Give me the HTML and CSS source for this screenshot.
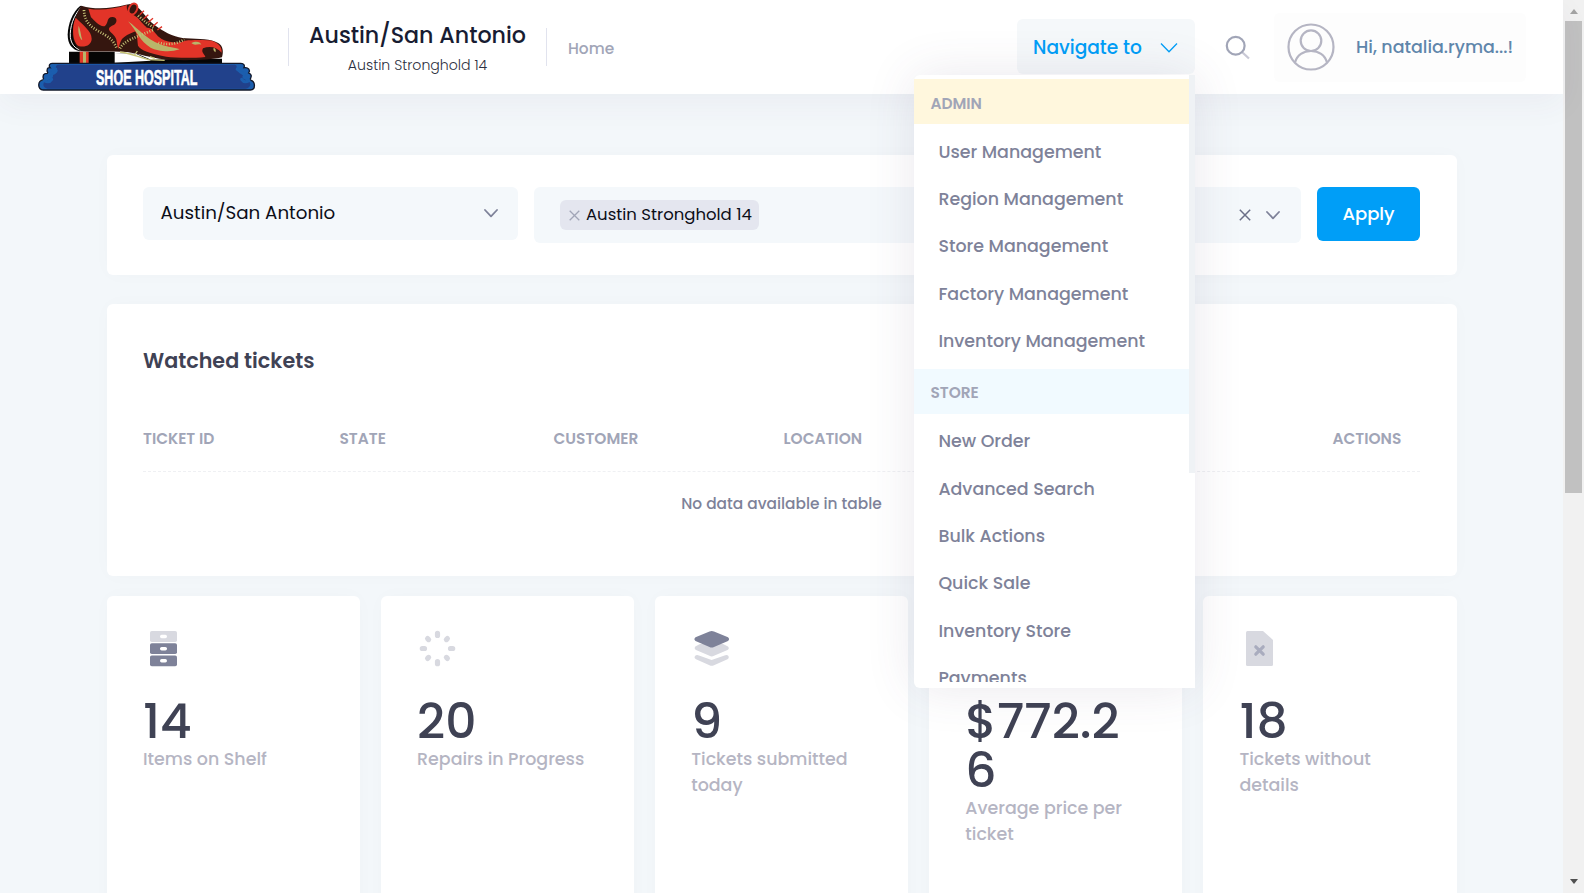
FILE: index.html
```html
<!DOCTYPE html>
<html lang="en">
<head>
<meta charset="utf-8">
<title>Shoe Hospital</title>
<link rel="stylesheet" href="styles.css">
</head>
<body>
<div class="page">
  <header class="header">
    <svg class="logo" viewBox="0 0 672 276" role="img" aria-label="Shoe Hospital">
      <!-- heel and sole -->
      <path d="M99 155H236V162L300 160L345 179L420 176H558V189H99Z" fill="#050505"/>
      <path d="M236 162L296 160L345 182L236 188Z" fill="#fff"/>
      <path d="M131 155h27v34h-27z" fill="#e23a28"/><path d="M141 155h9v34h-9z" fill="#b9b56a"/>
      <path d="M133 17C108 38 96 72 95 104C95 132 108 149 132 154L142 145L150 30Z" fill="#050505"/>
      <path d="M135 22C112 48 101 80 103 112C106 132 116 146 136 151" fill="none" stroke="#fff" stroke-width="3"/>
      <!-- upper -->
      <path d="M136 17C180 30 225 25 270 14L287 11L303 20C325 38 335 62 365 82C392 101 422 114 450 115C490 118 524 115 548 130C561 139 563 154 558 172C525 181 430 183 384 178C346 174 305 160 273 156C220 153 165 156 134 153C116 136 109 118 110 98C112 70 120 40 136 17Z" fill="#35160f"/>
      <path d="M119 53C139 74 167 92 167 116C167 132 151 143 130 139C111 132 105 83 119 53Z" fill="#e23428"/>
      <path d="M157 26C193 32 234 27 273 15C270 28 277 40 291 44C309 52 316 69 331 81C311 91 274 99 258 117C251 128 250 139 247 147C239 123 247 120 230 102C212 87 218 82 233 75C244 70 246 51 229 51C211 51 219 67 207 78C194 83 176 63 165 52Z" fill="#e23428"/>
      <path d="M276 64C303 55 319 83 342 85C354 91 360 107 377 117C395 127 428 132 447 122C475 119 493 120 515 121C542 122 559 139 557 158C543 141 521 137 501 145C494 158 506 162 508 171C468 175 420 174 391 170C340 160 315 151 306 137C303 114 306 98 288 80Z" fill="#e23428"/>
      <path d="M276 64C307 86 330 117 372 133C395 142 421 143 431 148C404 158 364 154 344 143C312 125 301 91 276 64Z" fill="#b9b56a"/>
      <path d="M128 77C125 92 128 112 139 121C134 104 134 91 128 77ZM466 129C481 122 493 126 496 134C483 130 477 139 466 129ZM533 143C539 144 541 152 538 157C533 153 531 148 533 143Z" fill="#b9b56a"/>
      <path d="M144 30C145 77 180 88 209 106C231 120 237 133 242 145M252 145C264 121 301 112 353 89M306 47C323 62 336 72 352 83M367 128C390 135 421 134 445 118" fill="none" stroke="#c7c478" stroke-width="8" stroke-dasharray="3 5"/>
      <path d="M324 32l-13 12M337 44l-14 12M351 55l-14 12M365 67l-14 12M378 80l-14 10" stroke="#e23428" stroke-width="4"/>
      <ellipse cx="291" cy="27" rx="12" ry="17" transform="rotate(25 291 27)" fill="#35160f" stroke="#e23428" stroke-width="6"/>
      <path d="M252 156C285 160 300 169 337 179L386 181M304 153l-8 12M342 170l14 5" fill="none" stroke="#c7c478" stroke-width="4"/>
      <!-- plinth -->
      <path d="M48 190H613C624 189 627 197 624 203C638 201 644 211 638 219C652 225 643 234 642 240C659 243 660 269 643 270H22C4 268 3 242 23 239C19 227 21 219 36 220C29 207 36 202 42 203C37 197 41 190 48 190Z" fill="#1b5eae" stroke="#12182a" stroke-width="4"/>
      <path d="M68 194H595C605 194 603 205 598 208C606 218 613 215 622 223C613 238 628 239 638 243C650 255 638 266 628 266H35C18 264 20 247 29 244C39 237 53 238 51 225C62 222 70 210 62 207C57 201 60 194 68 194Z" fill="#21418b"/>
      <path d="M39 223q13-8 20-16M25 242q14 8 22-4M624 223q-13-8-20-16M639 242q-14 8-22-4" fill="none" stroke="#1b5eae" stroke-width="9" stroke-linecap="round"/>
      <text class="logo-text" x="180" y="254" textLength="304" lengthAdjust="spacingAndGlyphs">SHOE HOSPITAL</text>
    </svg>
    <div class="region">
      <div class="region-name">Austin/San Antonio</div>
      <div class="region-store">Austin Stronghold 14</div>
    </div>
    <a class="home">Home</a>

    <div class="navigate">
      <button class="navigate-btn">Navigate to
        <svg width="18" height="12" viewBox="0 0 18 12"><path d="M1 1.5L9 9.8L17 1.5" fill="none" stroke="#009ef7" stroke-width="1.3"/></svg>
      </button>
      <div class="menu">
        <div class="menu-list">
          <div class="menu-title admin">ADMIN</div>
          <ul class="admin-items">
            <li>User Management</li><li>Region Management</li><li>Store Management</li><li>Factory Management</li><li>Inventory Management</li>
          </ul>
          <div class="menu-title store">STORE</div>
          <ul>
            <li>New Order</li><li>Advanced Search</li><li>Bulk Actions</li><li>Quick Sale</li><li>Inventory Store</li><li>Payments</li>
          </ul>
        </div>
        <div class="menu-thumb"></div>
      </div>
    </div>
    <svg class="search" width="26" height="26" viewBox="0 0 26 26" fill="none">
      <path d="M17.5 17.5L24 23.5" stroke="#c9c9d6" stroke-width="2.3"/>
      <circle cx="10.7" cy="10.7" r="8.9" stroke="#a1a5b7" stroke-width="2.2"/>
    </svg>
    <div class="user">
      <svg width="48" height="48" viewBox="0 0 48 48" fill="none" stroke="#b5b5c3" stroke-width="2.2">
        <circle cx="24" cy="24" r="22.5"/><circle cx="24" cy="17.7" r="10.3"/>
        <path d="M8 39.5C10 32 16.500 28 24 28S38 32 40 39.500"/>
      </svg>
      <span>Hi, natalia.ryma...!</span>
    </div>
  </header>

  <main class="content">
    <section class="card filter">
      <div class="select region-select">
        <span>Austin/San Antonio</span>
        <svg width="14" height="9" viewBox="0 0 14 9"><path d="M1 1L7 7.300L13 1" fill="none" stroke="#7e8299" stroke-width="1.800" stroke-linecap="round" stroke-linejoin="round"/></svg>
      </div>
      <div class="select store-select">
        <span class="tag">
          <svg width="11" height="11" viewBox="0 0 11 11"><path d="M.7.7L10.300 10.300M10.300.7L.7 10.300" stroke="#a1a5b7" stroke-width="1.3"/></svg>
          <span class="tag-text">Austin Stronghold 14</span>
        </span>
        <svg class="clear" width="12" height="12" viewBox="0 0 12 12"><path d="M.8.8L11.200 11.200M11.200.8L.8 11.200" stroke="#6b6f88" stroke-width="1.500"/></svg>
        <svg width="14" height="9" viewBox="0 0 14 9"><path d="M1 1L7 7.300L13 1" fill="none" stroke="#7e8299" stroke-width="1.800" stroke-linecap="round" stroke-linejoin="round"/></svg>
      </div>
      <button class="apply">Apply</button>
    </section>

    <section class="card watched">
      <h2>Watched tickets</h2>
      <div class="thead"><span>TICKET ID</span><span>STATE</span><span>CUSTOMER</span><span>LOCATION</span><span>ACTIONS</span></div>
      <div class="empty">No data available in table</div>
    </section>

    <section class="stats">
      <div class="card stat">
        <svg viewBox="0 0 42 42"><rect x="7" y="3" width="27" height="11" rx="1.800" fill="#d8d9e0"/><rect x="7" y="15.300" width="27" height="10.800" rx="1.800" fill="#7e8299"/><rect x="7" y="27.400" width="27" height="10.800" rx="1.800" fill="#7e8299"/><g fill="#fff"><rect x="17" y="6.800" width="7" height="3.500" rx="1.700"/><rect x="17" y="18.900" width="7" height="3.500" rx="1.700"/><rect x="17" y="31" width="7" height="3.500" rx="1.700"/></g></svg>
        <div class="num">14</div><div class="label">Items on Shelf</div>
      </div>
      <div class="card stat">
        <svg viewBox="0 0 42 42" stroke="#d8d9e0" stroke-width="5.200" stroke-linecap="round"><path d="M20.500 5.300v2.200M20.500 33.500v2.200M5.300 20.500h2.200M33.500 20.500h2.200M10.600 10.600l1 1M29.400 29.400l1 1M10.600 30.400l1-1M29.400 11.600l1-1"/></svg>
        <div class="num">20</div><div class="label">Repairs in Progress</div>
      </div>
      <div class="card stat">
        <svg viewBox="0 0 42 42"><path d="M4 28Q5.500 26.500 8 27.500L20.600 32L33.500 27.500Q36 26.500 37.500 28Q38.500 30.200 36.500 31.200L23 37.200Q20.600 38.500 18.500 37.200L5 31.200Q2.800 30.200 4 28ZM9 16H32L37 18.500Q38.800 20.500 36.500 22L23 27.800Q20.600 29 18.500 27.800L5 22Q2.800 20.500 4.300 18.500Z" fill="#d8d9e0"/><path d="M18.500 3.500Q20.600 2.700 23 3.500L37 9.300Q39.200 11.200 37 13L23 19Q20.600 20 18.500 19L4.500 13Q2.300 11.200 4.500 9.300Z" fill="#7e8299"/></svg>
        <div class="num">9</div><div class="label">Tickets submitted today</div>
      </div>
      <div class="card stat">
        <svg viewBox="0 0 42 42"></svg>
        <div class="num">$772.2<br>6</div><div class="label">Average price per ticket</div>
      </div>
      <div class="card stat">
        <svg viewBox="0 0 42 42"><path d="M8.500 3H24L34 12V36.500Q34 38 32.500 38H8.500Q7 38 7 36.500V4.500Q7 3 8.500 3Z" fill="#d8d9e0"/><path d="M16.800 18.800L24.200 26.200M24.200 18.800L16.800 26.200" stroke="#a9acbe" stroke-width="3.200" stroke-linecap="round"/></svg>
        <div class="num">18</div><div class="label">Tickets without details</div>
      </div>
    </section>
  </main>
</div>
<div class="scrollbar">
  <div class="arrow up"></div>
  <div class="thumb"></div>
  <div class="arrow down"></div>
</div>
</body>
</html>
```
FILE: styles.css
```css
* { box-sizing: border-box; }
body {
  margin: 0;
  display: flex;
  height: 893px;
  overflow: hidden;
  background: #f3f7fa;
  font-family: Poppins, Inter, "Open Sans", sans-serif;
  font-weight: 500;
  color: #3f4254;
}
button { border: 0; font: inherit; }
ul { list-style: none; margin: 0; padding: 4px 0; }
svg { display: block; flex: none; }
.page { width: 1563px; flex: none; }

/* Header */
.header {
  position: relative;
  z-index: 2;
  display: flex;
  align-items: center;
  height: 94px;
  padding: 0 37px 0 36px;
  background: #fff;
  box-shadow: 0 10px 30px rgba(82, 63, 105, .05);
  white-space: nowrap;
}
.logo { width: 224px; height: 92px; align-self: flex-start; }
.logo-text { font: bold 67px "Liberation Sans", Arial, sans-serif; fill: #fff; stroke: #fff; stroke-width: 2px; }
.region {
  display: flex;
  flex-direction: column;
  align-items: center;
  justify-content: center;
  width: 259px;
  height: 38px;
  margin-left: 28px;
  border: solid #e1e3ee;
  border-width: 0 1px;
}
.region-name { line-height: 30px; font-size: 22.2px; color: #181c32; padding-top: 5px; }
.region-store { line-height: 28px; font-size: 14.1px; font-weight: 300; color: #2c2f40; }
.home { margin-left: 21px; padding-top: 2px; font-size: 15.4px; color: #a1a5b7; }

.navigate { position: relative; margin-left: auto; }
.navigate-btn {
  display: flex;
  align-items: center;
  justify-content: space-between;
  width: 178px;
  height: 55px;
  margin-top: -1px;
  padding: 2px 17px 0 16px;
  border-radius: 6px;
  background: #f5f8fa;
  color: #009ef7;
  font-size: 18.6px;
}
.search { margin-left: 30px; margin-top: 2px; }
.user {
  display: flex;
  align-items: center;
  gap: 21px;
  width: 252px;
  height: 69px;
  margin-left: 23px;
  padding-left: 13px;
  border-radius: 6px;
  background: #fdfdfd;
  color: #5f86ab;
  font-size: 17.45px;
}

/* Dropdown */
.menu {
  position: absolute;
  top: 55px;
  right: 0;
  display: flex;
  width: 281px;
  height: 613px;
  padding: 4px 0 6px;
  border-radius: 6px 0 0 6px;
  background: #fff;
  box-shadow: 0 0 50px rgba(82, 63, 105, .12);
}
.menu-list { flex: 1; overflow: hidden; }
.menu-thumb { width: 6px; height: 398px; margin-top: -4px; background: #eff2f5; }
.menu-title {
  height: 45px;
  padding-left: 16.400px;
  line-height: 49px;
  font-size: 15.4px;
  font-weight: 600;
  color: #a1a5b7;
}
.admin { background: #fff7dd; }
.store { background: #f1faff; line-height: 48px; }
.admin-items { padding: 4.800px 0 4.200px; }
.menu li {
  height: 47.300px;
  padding-left: 24.400px;
  line-height: 47px;
  font-size: 17.45px;
  color: #7e8299;
}

/* Cards */
.content { padding: 61px 106.500px 0 107px; }
.card { border-radius: 6px; background: #fff; box-shadow: 0 0 20px rgba(76, 87, 125, .02); }
.filter { display: flex; align-items: flex-start; height: 120px; padding: 32px 36px; }
.select {
  display: flex;
  flex: none;
  align-items: center;
  border-radius: 6px;
  background: #f4f8fb;
  color: #0c0e18;
}
.region-select {
  justify-content: space-between;
  width: 375px;
  height: 53px;
  padding: 0 20px 0 17.500px;
  font-size: 18.25px;
  font-weight: 400;
}
.region-select span { padding-bottom: 2px; }
.store-select { width: 767px; height: 56px; margin-left: 16px; padding: 0 21px 0 26px; }
.tag {
  display: flex;
  align-items: center;
  gap: 6px;
  width: 199px;
  height: 30px;
  padding-left: 9px;
  border-radius: 6px;
  background: #e4e6ef;
  font-size: 16.5px;
  font-weight: 400;
  white-space: nowrap;
}
.tag-text { padding-bottom: 2px; }
.clear { margin: 0 15px 0 auto; }
.apply {
  flex: none;
  width: 103px;
  height: 54px;
  margin-left: 16px;
  padding-bottom: 3px;
  border-radius: 6px;
  background: #009ef7;
  color: #fff;
  font-size: 18px;
}
.watched { height: 272px; margin-top: 29px; padding: 41px 36.500px 0 36px; }
h2 { margin: 0; line-height: 32px; font-size: 20.7px; font-weight: 600; }
.thead {
  display: grid;
  grid-template-columns: 196.500px 214px 230px 549px 1fr;
  height: 65px;
  margin-top: 30px;
  padding-top: 20px;
  border-bottom: 1px dashed #eff0f3;
  line-height: 24px;
  font-size: 15.4px;
  font-weight: 600;
  color: #a1a5b7;
}
.empty {
  padding-top: 19px;
  line-height: 26px;
  text-align: center;
  font-size: 15.4px;
  color: #7e8299;
}

.stats { display: grid; grid-template-columns: repeat(5, 1fr); gap: 21px; margin-top: 20px; }
.stat { height: 340px; padding: 32px 35px 0 36px; }
.stat svg { width: 42px; height: 42px; }
.num { margin-top: 27px; line-height: 49px; font-size: 48.8px; }
.label { line-height: 26.400px; font-size: 17.45px; color: #b5b5c3; }

/* Window scrollbar */
.scrollbar { display: flex; flex-direction: column; align-items: center; width: 21px; height: 893px; background: #f1f1f1; }
.thumb { width: 17px; height: 472px; margin-top: 7px; background: #c1c1c1; }
.arrow { border: solid transparent; border-width: 0 4.500px; }
.up { margin-top: 9px; border-bottom: 5px solid #a3a3a3; }
.down { margin-top: auto; margin-bottom: 9px; border-top: 5px solid #505050; }
```
